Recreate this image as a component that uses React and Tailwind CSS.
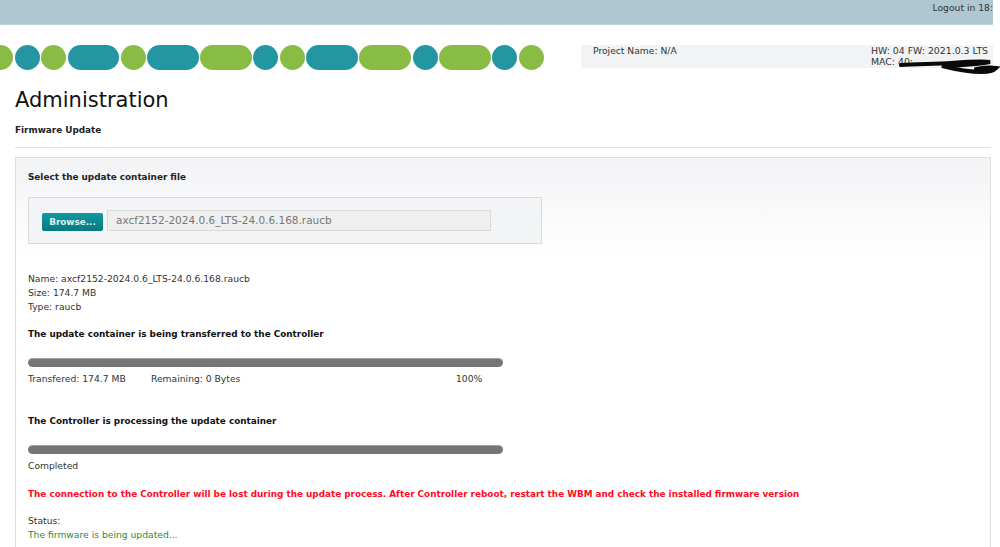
import React from 'react';

const PILLS = [
  ['g', 0], ['t', 0], ['g', 0], ['t', 1], ['g', 0], ['t', 1], ['g', 1], ['t', 0],
  ['g', 0], ['t', 1], ['g', 1], ['t', 0], ['g', 1], ['t', 0], ['g', 0],
];

const ProgressBar = () => (
  <div className="w-[475px] h-[9px] rounded-full bg-[#757575] border-t border-[#a3a3a3]" />
);

const Pills = () => (
  <div className="flex gap-[1.55px] -ml-[12px] w-[560px] shrink-0 h-[25px]">
    {PILLS.map(([color, wide], i) => (
      <div
        key={i}
        className={`h-[25px] rounded-full shrink-0 ${wide ? 'w-[51.5px]' : 'w-[25px]'} ${color === 'g' ? 'bg-[#89bc45]' : 'bg-[#2396a1]'}`}
      />
    ))}
  </div>
);

const App = () => {
  return (
    <div className="w-[1000px] h-[547px] overflow-hidden bg-white text-[9.2px] leading-[14px] text-[#333] font-['DejaVu_Sans',sans-serif]">
      <div className="w-[993px]">
        <div className="h-[25px] bg-[#afc7d1] border-b border-[#c3d5dc] overflow-hidden flex justify-end">
          <span className="mt-[1px] text-[#333] whitespace-nowrap">Logout in 18:</span>
        </div>

        <div className="flex mt-[20px] h-[25px]">
          <Pills />
          <div className="relative ml-[33px] w-[412px] h-[23px] bg-[#f1f3f4] flex justify-between pl-[12px] pr-[5px]">
            <span className="leading-[11px]">Project Name: N/A</span>
            <div className="w-[117px] whitespace-nowrap text-[9.35px]">
              <div className="leading-[11px]">HW: 04 FW: 2021.0.3 LTS</div>
              <div className="leading-[12px]">MAC: 40:</div>
            </div>
            <svg className="absolute left-[315px] top-[12px]" width="104" height="19" viewBox="0 0 104 19" fill="none">
              <path
                d="M5 8 C20 7 40 7 55 6 C70 5 85 4 94 5 C80 8 60 8 46 9 C58 12 72 15 86 15 C93 15 98 13 100 11 C94 10 86 11 80 12"
                stroke="#0a0a0a"
                strokeWidth="4.2"
                strokeLinecap="round"
              />
            </svg>
          </div>
        </div>

        <div className="pl-[15px] pr-[2px]">
          <h1 className="mt-[16px] text-[21px] leading-[28px] text-[#111] font-normal">Administration</h1>
          <h2 className="mt-[9px] font-bold text-[8.85px] text-[#222] leading-[14px]">Firmware Update</h2>
          <div className="mt-[10px] h-px bg-[#e2e3e5]" />

          <div className="mt-[9px] h-[420px] border border-[#dfdfdf] bg-gradient-to-b from-[#f2f3f5] to-white to-[100px] px-[12px] pt-[12px]">
            <div className="font-bold text-[8.85px] text-[#222]">Select the update container file</div>

            <div className="mt-[13px] w-[514px] h-[47px] border border-[#d9d9d9] bg-[#f3f4f5] flex items-center pl-[13px] gap-[4px]">
              <button className="w-[61px] h-[18px] mt-[2px] rounded-[2px] bg-gradient-to-b from-[#0f9aa0] to-[#08797f] text-[#d8f0f0] font-bold text-[8.85px] leading-[18px]">
                Browse...
              </button>
              <div className="w-[384px] h-[21px] border border-[#d9d9d9] bg-[#efefef] pl-[8px] leading-[19px] text-[#777] text-[10.5px]">
                axcf2152-2024.0.6_LTS-24.0.6.168.raucb
              </div>
            </div>

            <div className="mt-[28px]">
              <div>Name: axcf2152-2024.0.6_LTS-24.0.6.168.raucb</div>
              <div>Size: 174.7 MB</div>
              <div>Type: raucb</div>
            </div>

            <div className="mt-[13px] font-bold text-[8.85px] text-[#111]">The update container is being transferred to the Controller</div>

            <div className="mt-[17px]"><ProgressBar /></div>
            <div className="mt-[5px] flex w-[475px]">
              <span className="w-[123px]">Transfered: 174.7 MB</span>
              <span className="w-[305px]">Remaining: 0 Bytes</span>
              <span>100%</span>
            </div>

            <div className="mt-[28px] font-bold text-[8.85px] text-[#111]">The Controller is processing the update container</div>

            <div className="mt-[17px]"><ProgressBar /></div>
            <div className="mt-[5px]">Completed</div>

            <div className="mt-[14px] font-bold text-[8.85px] text-[#ff0a1e] whitespace-nowrap">
              The connection to the Controller will be lost during the update process. After Controller reboot, restart the WBM and check the installed firmware version
            </div>

            <div className="mt-[13px]">Status:</div>
            <div className="text-[#2e8b36]">The firmware is being updated...</div>
          </div>
        </div>
      </div>
    </div>
  );
};

export default App;
